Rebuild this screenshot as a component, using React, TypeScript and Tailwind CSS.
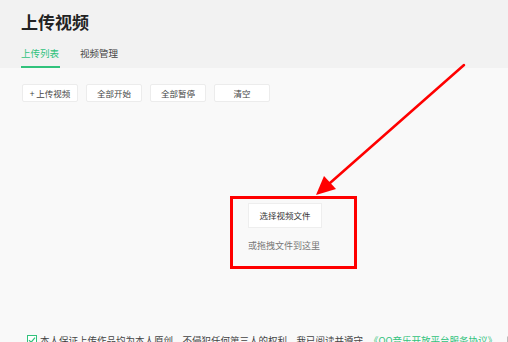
import React from "react";

const tools = ["+ 上传视频", "全部开始", "全部暂停", "清空"];

const App = () => {
    return (
        <div className="relative w-[508px] h-[342px] overflow-hidden bg-[#f9f9f9] font-['Noto_Sans_CJK_SC','Noto_Sans',sans-serif] text-[#333]">
            {/* header */}
            <div className="h-[68px] bg-[#f2f2f2] pl-[21px] pt-[12px]">
                <h1 className="text-[17px] leading-[19px] font-bold text-[#222]">上传视频</h1>
                <div className="flex gap-[20px] mt-[15px] text-[9.5px] leading-[14px]">
                    <div className="text-[#31c27c] border-b-2 border-[#31c27c] pb-[6px] w-[39px]">上传列表</div>
                    <div className="text-[#444] pb-[6px]">视频管理</div>
                </div>
            </div>

            {/* toolbar */}
            <div className="flex gap-[8px] pl-[22px] pt-[16px]">
                {tools.map((t) => (
                    <button
                        key={t}
                        className="w-[56px] h-[18px] bg-white border border-[#ececec] rounded-[2px] text-[8.5px] leading-none text-[#444] flex items-center justify-center"
                    >
                        {t}
                    </button>
                ))}
            </div>

            {/* drop zone */}
            <div className="ml-[230px] mt-[94px] w-[127px] h-[73px] border-[3px] border-[#ff0000] pl-[15px] pt-[4px]">
                <button className="w-[74px] h-[25px] bg-white border border-[#eeeeee] text-[8.5px] leading-none text-[#333] flex items-center justify-center">
                    选择视频文件
                </button>
                <p className="mt-[12px] text-[9px] leading-[12px] text-[#777] whitespace-nowrap">或拖拽文件到这里</p>
            </div>

            {/* agreement */}
            <div className="flex items-center mt-[65px] pl-[27px] whitespace-nowrap text-[9.5px] leading-[12px] text-[#444]">
                <span className="w-[10px] h-[10px] border border-[#31c27c] bg-white flex items-center justify-center mr-[3px] shrink-0">
                    <svg width="8" height="8" viewBox="0 0 8 8">
                        <path d="M1 4.2 L3.2 6.2 L7 1.6" fill="none" stroke="#31c27c" strokeWidth="1.2" />
                    </svg>
                </span>
                <span>本人保证上传作品均为本人原创，不侵犯任何第三人的权利，我已阅读并遵守</span>
                <span className="ml-[6px] text-[#31c27c]">《QQ音乐开放平台服务协议》</span>
                <span className="ml-[10px] w-[10px] h-[8px] border border-[#bbb] rounded-[1px] shrink-0"></span>
            </div>

            {/* annotation arrow */}
            <svg className="absolute left-0 top-0 pointer-events-none" width="508" height="342">
                <line x1="464" y1="65" x2="330" y2="183" stroke="#ff0000" strokeWidth="2.5" strokeLinecap="round" />
                <polygon points="316,195 324,176 336,189" fill="#ff0000" />
            </svg>
        </div>
    );
};

export default App;
